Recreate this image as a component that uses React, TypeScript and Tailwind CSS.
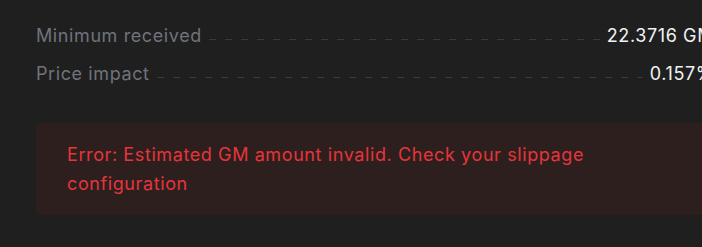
import React from "react";

const Row = ({ label, value }: { label: string; value: string }) => {
  return (
    <div className="flex items-center h-[38px]">
      <span className="text-[#6f737b] whitespace-nowrap">{label}</span>
      <div className="flex-1 mx-[7px] h-px mt-[9px] bg-[linear-gradient(to_right,#3a3a3a_7px,transparent_7px)] bg-[length:16px_1px] bg-repeat-x" />
      <span className="text-[#f2f2f2] whitespace-nowrap">{value}</span>
    </div>
  );
};

export default function App() {
  return (
    <div className="w-full h-[247px] overflow-hidden bg-[#1f1f1f]">
      <div
        className="w-[750px] pl-[36px] pr-[36px] pt-[16px] text-[18px] tracking-[0.6px]"
        style={{ fontFamily: "Inter, 'Liberation Sans', sans-serif" }}
      >
        <Row label="Minimum received" value="22.3716 GM" />
        <Row label="Price impact" value="0.157%" />
        <div className="mt-[31px] rounded-[4px] bg-[#2e1f1f] px-[31px] py-[17px] text-[#e5353a] leading-[29px]">
          Error: Estimated GM amount invalid. Check your slippage
          <br />
          configuration
        </div>
      </div>
    </div>
  );
}
